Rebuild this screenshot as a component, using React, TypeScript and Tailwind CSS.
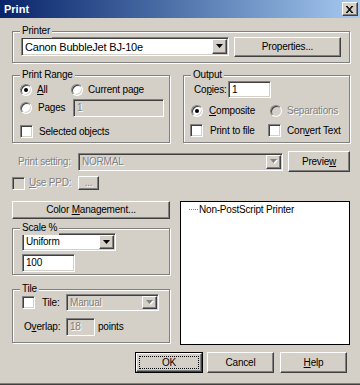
import type { ReactNode } from 'react';

const raised =
  'border border-t-white border-l-white border-r-[#404040] border-b-[#404040] shadow-[inset_-1px_-1px_0_#808080]';
const sunken =
  'border border-t-[#808080] border-l-[#808080] border-r-white border-b-white shadow-[inset_1px_1px_0_#404040,inset_-1px_-1px_0_#d4d0c8]';
const grayText = 'text-[#808080] [text-shadow:1px_1px_0_#fff]';

const U = ({ children }: { children: ReactNode }) => (
  <span className="underline underline-offset-[1px]">{children}</span>
);

const Group = ({
  title,
  className = '',
  children,
}: {
  title: string;
  className?: string;
  children: ReactNode;
}) => (
  <div
    className={`relative shrink-0 border border-[#808080] shadow-[inset_1px_1px_0_#fff,1px_1px_0_#fff] ${className}`}
  >
    <span className="absolute -top-[8px] left-[7px] bg-[#d4d0c8] px-[2px] leading-[14px]">
      {title}
    </span>
    {children}
  </div>
);

const Btn = ({ className = '', children }: { className?: string; children: ReactNode }) => (
  <div className={`flex shrink-0 items-center justify-center bg-[#d4d0c8] ${raised} ${className}`}>
    {children}
  </div>
);

const Arrow = ({ disabled }: { disabled?: boolean }) => (
  <svg width="8" height="5" viewBox="0 0 8 5">
    {disabled && <path d="M1 1h7L4.5 5z" fill="#fff" />}
    <path d="M0 0h7L3.5 4z" fill={disabled ? '#808080' : '#000'} />
  </svg>
);

const Combo = ({
  text,
  disabled,
  className = '',
  textClass = '',
}: {
  text: string;
  disabled?: boolean;
  className?: string;
  textClass?: string;
}) => (
  <div
    className={`flex shrink-0 items-stretch p-[1px] ${sunken} ${disabled ? 'bg-[#d4d0c8]' : 'bg-white'} ${className}`}
  >
    <span
      className={`flex flex-1 items-center overflow-hidden whitespace-nowrap pl-[2px] ${disabled ? grayText : ''} ${textClass}`}
    >
      {text}
    </span>
    <span className={`flex w-[15px] items-center justify-center bg-[#d4d0c8] ${raised}`}>
      <Arrow disabled={disabled} />
    </span>
  </div>
);

const Field = ({
  text,
  disabled,
  className = '',
}: {
  text: string;
  disabled?: boolean;
  className?: string;
}) => (
  <div
    className={`flex shrink-0 items-center pl-[3px] ${sunken} ${disabled ? `bg-[#d4d0c8] ${grayText}` : 'bg-white'} ${className}`}
  >
    {text}
  </div>
);

const Radio = ({ checked, disabled }: { checked?: boolean; disabled?: boolean }) => (
  <span
    className={`flex h-[12px] w-[12px] shrink-0 items-center justify-center rounded-full border border-t-[#808080] border-l-[#808080] border-r-white border-b-white shadow-[inset_1px_1px_0_#404040,inset_-1px_-1px_0_#d4d0c8] ${disabled ? 'bg-[#d4d0c8]' : 'bg-white'}`}
  >
    {checked && <span className="h-[4px] w-[4px] rounded-full bg-black" />}
  </span>
);

const Check = ({ disabled }: { disabled?: boolean }) => (
  <span
    className={`block h-[13px] w-[13px] shrink-0 ${sunken} ${disabled ? 'bg-[#d4d0c8]' : 'bg-white'}`}
  />
);

const TitleBar = () => (
  <div className="flex h-[18px] shrink-0 items-center bg-linear-to-r from-[#0a246a] to-[#a6caf0] pl-[4px] pr-[2px]">
    <span className="text-[11px] font-bold tracking-normal text-white">Print</span>
    <div className={`ml-auto flex h-[14px] w-[16px] items-center justify-center bg-[#d4d0c8] ${raised}`}>
      <svg width="8" height="7" viewBox="0 0 8 7">
        <path d="M0 0l6 7M1 0l6 7M6 0L0 7M7 0L1 7" stroke="#000" strokeWidth="1" />
      </svg>
    </div>
  </div>
);

export default function App() {
  return (
    <div className="flex h-[385px] w-[360px] flex-col overflow-hidden border-b border-b-[#404040] bg-[#d4d0c8] font-['Liberation_Sans',Arial,sans-serif] text-[10px] leading-[12px] tracking-[-0.2px] text-black shadow-[inset_0_-1px_0_#808080]">
      <TitleBar />
      <div className="flex flex-col pl-[12px]">
        <Group title="Printer" className="mt-[13px] h-[32px] w-[338px]">
          <div className="flex items-start pl-[8px] pt-[5px]">
            <Combo text="Canon BubbleJet BJ-10e" className="h-[19px] w-[208px]" textClass="text-[11px]" />
            <Btn className="ml-[5px] h-[20px] w-[107px]">Properties...</Btn>
          </div>
        </Group>

        <div className="mt-[12px] flex">
          <Group title="Print Range" className="h-[68px] w-[158px]">
            <div className="flex flex-col pl-[7px] pt-[8px]">
              <div className="flex h-[12px] items-center">
                <div className="flex w-[51px] items-center gap-[5px]">
                  <Radio checked />
                  <span>
                    <U>A</U>ll
                  </span>
                </div>
                <div className="flex items-center gap-[5px]">
                  <Radio />
                  <span>Current page</span>
                </div>
              </div>
              <div className="mt-[3px] flex h-[18px] items-center">
                <div className="flex w-[53px] items-center gap-[6px]">
                  <Radio />
                  <span>Pages</span>
                </div>
                <Field text="1" disabled className="h-[18px] w-[91px]" />
              </div>
              <div className="mt-[8px] flex h-[13px] items-center gap-[6px]">
                <Check />
                <span>Selected objects</span>
              </div>
            </div>
          </Group>

          <Group title="Output" className="ml-[13px] h-[68px] w-[167px]">
            <div className="flex flex-col pl-[6px] pt-[5px]">
              <div className="flex h-[17px] items-center">
                <span className="ml-[4px] w-[34px]">
                  Co<U>p</U>ies:
                </span>
                <Field text="1" className="h-[17px] w-[43px]" />
              </div>
              <div className="mt-[7px] flex h-[12px] items-center">
                <div className="ml-[1px] flex w-[79px] items-center gap-[6px]">
                  <Radio checked />
                  <span>
                    <U>C</U>omposite
                  </span>
                </div>
                <div className={`flex items-center gap-[5px] ${grayText}`}>
                  <Radio disabled />
                  <span>Separations</span>
                </div>
              </div>
              <div className="mt-[7px] flex h-[13px] items-center">
                <div className="flex w-[78px] items-center gap-[7px]">
                  <Check />
                  <span>Print to file</span>
                </div>
                <div className="flex items-center gap-[6px]">
                  <Check />
                  <span className="whitespace-nowrap">
                    Con<U>v</U>ert Text
                  </span>
                </div>
              </div>
            </div>
          </Group>
        </div>

        <div className="mt-[8px] flex h-[21px] items-center">
          <span className={`ml-[6px] w-[60px] whitespace-nowrap ${grayText}`}>Print setting:</span>
          <Combo text="NORMAL" disabled className="h-[18px] w-[205px]" />
          <Btn className="ml-[5px] h-[21px] w-[62px]">
            <span>
              Previe<U>w</U>
            </span>
          </Btn>
        </div>

        <div className="mt-[4px] flex h-[14px] items-center">
          <div className={`flex w-[66px] items-center gap-[4px] ${grayText}`}>
            <Check disabled />
            <span>
              <U>U</U>se PPD:
            </span>
          </div>
          <Btn className={`h-[14px] w-[21px] ${grayText}`}>...</Btn>
        </div>

        <div className="mt-[11px] flex">
          <div className="flex w-[158px] flex-col">
            <Btn className="h-[18px] w-[158px]">
              <span>
                Color <U>M</U>anagement...
              </span>
            </Btn>
            <Group title="Scale %" className="mt-[9px] h-[47px] w-[158px]">
              <div className="flex flex-col pl-[9px] pt-[4px]">
                <Combo text="Uniform" className="h-[18px] w-[94px]" />
                <Field text="100" className="mt-[3px] h-[18px] w-[53px]" />
              </div>
            </Group>
            <Group title="Tile" className="mt-[14px] h-[54px] w-[158px]">
              <div className="flex flex-col pl-[9px] pt-[4px]">
                <div className="flex h-[17px] items-center">
                  <div className="flex w-[44px] items-center gap-[7px]">
                    <Check />
                    <span>Tile:</span>
                  </div>
                  <Combo text="Manual" disabled className="h-[17px] w-[93px]" />
                </div>
                <div className="mt-[7px] flex h-[18px] items-center">
                  <span className="ml-[2px] w-[42px]">
                    O<U>v</U>erlap:
                  </span>
                  <Field text="18" disabled className="h-[18px] w-[29px]" />
                  <span className="ml-[3px]">points</span>
                </div>
              </div>
            </Group>
          </div>

          <div className="ml-[10px] h-[144px] w-[170px] border border-black bg-white pt-[1px]">
            <div className="flex h-[13px] items-center">
              <span className="ml-[8px] w-[9px] border-t border-dotted border-[#808080]" />
              <span className="ml-[1px]">Non-PostScript Printer</span>
            </div>
          </div>
        </div>

        <div className="mt-[7px] flex h-[21px]">
          <div className="ml-[123px] flex h-[21px] w-[68px] border border-black">
            <div className={`flex flex-1 items-center justify-center bg-[#d4d0c8] p-[2px] ${raised}`}>
              <div className="flex h-full w-full items-center justify-center border border-dotted border-black">
                OK
              </div>
            </div>
          </div>
          <Btn className="ml-[4px] h-[21px] w-[67px]">Cancel</Btn>
          <Btn className="ml-[6px] h-[21px] w-[67px]">
            <span>
              <U>H</U>elp
            </span>
          </Btn>
        </div>
      </div>
    </div>
  );
}
